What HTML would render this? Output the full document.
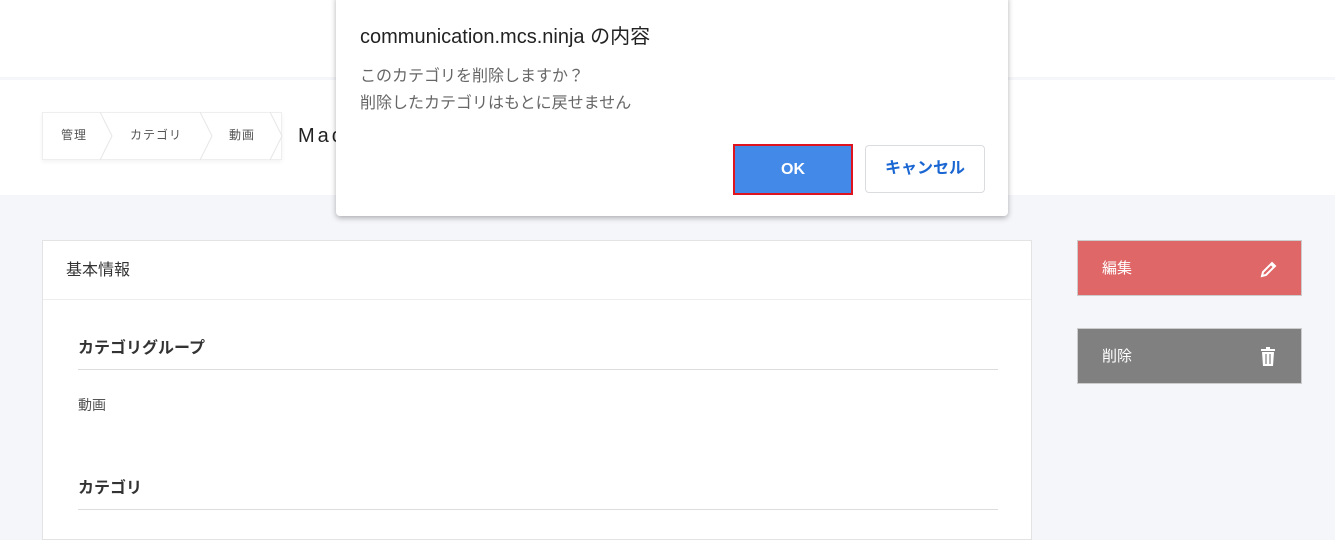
<!DOCTYPE html>
<html><head><meta charset="utf-8"><style>
*{box-sizing:border-box;margin:0;padding:0}
body{width:1335px;height:523px;overflow:hidden;background:#f5f6fa;font-family:"Liberation Sans","Noto Sans CJK JP",sans-serif;position:relative;color:#333}
.top{position:absolute;left:0;top:0;width:1335px;height:77px;background:#fff}
.sub{position:absolute;left:0;top:80px;width:1335px;height:115px;background:#fff}
.bc{position:absolute;left:42px;top:112px;width:240px;height:48px;background:#fff;border:1px solid #eee;box-shadow:0 2px 4px rgba(0,0,0,.05)}
.bc div{position:absolute;top:0;font-size:12px;color:#555;line-height:44px;letter-spacing:1px;white-space:nowrap}
.sep{position:absolute;top:0}
.title{position:absolute;left:298px;top:125px;font-size:20px;color:#222;letter-spacing:3px}
.card{position:absolute;left:42px;top:240px;width:990px;height:300px;background:#fff;border:1px solid #e3e3e3}
.card .h{height:59px;border-bottom:1px solid #eee;padding-left:23px;line-height:59px;font-size:16px;color:#333}
.lbl{position:absolute;left:35px;width:920px;font-size:16px;font-weight:bold;color:#333;border-bottom:1px solid #ddd;padding-bottom:11px}
.val{position:absolute;left:35px;font-size:14px;color:#555}
.btn{position:absolute;left:1077px;width:225px;height:56px;color:#fff;font-size:15px;line-height:56px;padding-left:24px;border:1px solid #ccc}
.dlg{position:absolute;left:336px;top:-4px;width:672px;height:220px;background:#fff;border-radius:0 0 4px 4px;box-shadow:0 2px 6px rgba(0,0,0,.3)}
</style></head><body>
<div class="top"></div>
<div class="sub"></div>
<div class="bc">
<div style="left:18px">管理</div>
<div style="left:87px">カテゴリ</div>
<div style="left:186px">動画</div>
<svg class="sep" width="250" height="48" style="left:-1px;top:-1px"><path d="M58 0 L70 24 L58 48 M158 0 L170 24 L158 48 M228 0 L240 24 L228 48" fill="none" stroke="#e6e6e6"/></svg>
</div>
<div class="title">Mac</div>
<div class="card"><div class="h">基本情報</div>
<div class="lbl" style="top:93px">カテゴリグループ</div>
<div class="val" style="top:154px">動画</div>
<div class="lbl" style="top:233px">カテゴリ</div>
</div>
<div class="btn" style="top:240px;background:#df6767">編集
<svg style="position:absolute;left:182px;top:19px" width="18" height="18" viewBox="0 0 18 18"><path d="M2 16 L3 12 L12 3 L15 6 L6 15 Z M11 4 L14 7" fill="none" stroke="#fff" stroke-width="2"/></svg></div>
<div class="btn" style="top:328px;background:#808080">削除
<svg style="position:absolute;left:182px;top:18px" width="16" height="19" viewBox="0 0 16 19"><rect x="1" y="2" width="14" height="2" fill="#fff"/><rect x="6" y="0" width="4" height="2" fill="#fff"/><path d="M2 5 H14 L13 19 H3 Z" fill="#fff"/><path d="M6 7 V17 M10 7 V17" stroke="#808080" stroke-width="1.2"/></svg></div>
<div class="dlg">
<div style="position:absolute;left:24px;top:24px;font-size:20px;color:#222">communication.mcs.ninja の内容</div>
<div style="position:absolute;left:24px;top:67px;font-size:16px;color:#666;line-height:27px">このカテゴリを削除しますか？<br>削除したカテゴリはもとに戻せません</div>
<div style="position:absolute;left:397px;top:148px;width:120px;height:51px;border:2px solid #e0141e;background:#4289e8;color:#fff;font-weight:bold;font-size:16px;text-align:center;line-height:47px">OK</div>
<div style="position:absolute;left:529px;top:149px;width:120px;height:48px;border:1px solid #dadce0;border-radius:4px;color:#1a66d2;font-weight:bold;font-size:16px;text-align:center;line-height:46px">キャンセル</div>
</div>
</body></html>
